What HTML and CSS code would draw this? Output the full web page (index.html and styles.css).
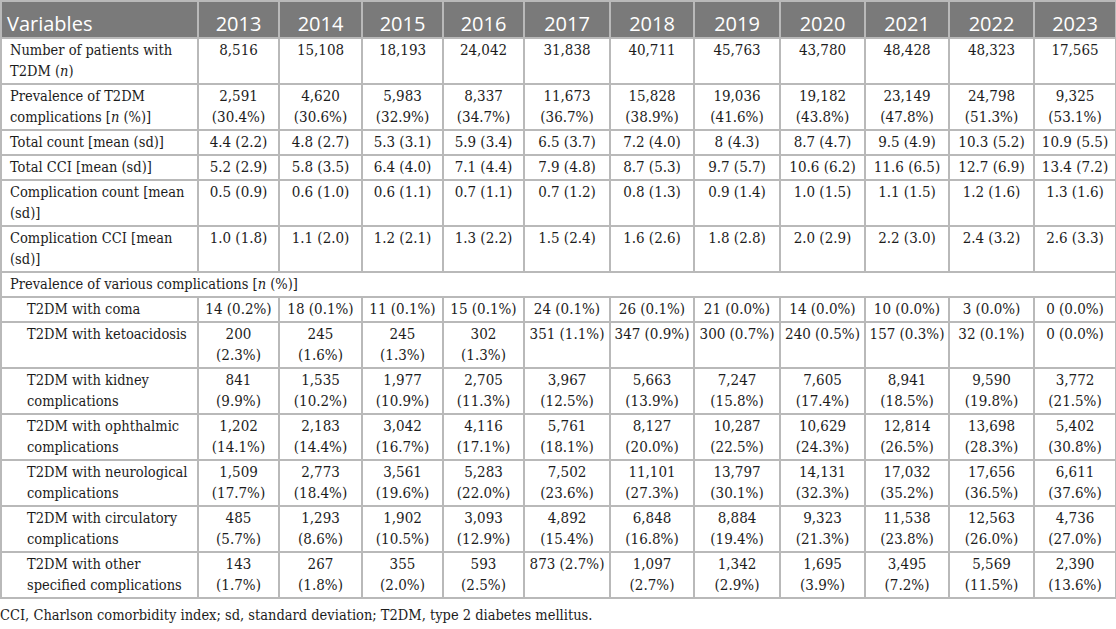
FILE: index.html
```html
<!DOCTYPE html>
<html lang="en">
<head>
<meta charset="utf-8">
<title>T2DM complications 2013–2023</title>
<link rel="stylesheet" href="styles.css">
</head>
<body>
<table class="data">
<colgroup>
<col class="c-var"><col class="c81"><col class="c83"><col class="c81"><col class="c81"><col class="c86"><col class="c84"><col class="c86"><col class="c85"><col class="c84"><col class="c85"><col class="c82">
</colgroup>
<thead>
<tr>
<th class="h-var">Variables</th><th>2013</th><th>2014</th><th>2015</th><th>2016</th><th>2017</th><th>2018</th><th>2019</th><th>2020</th><th>2021</th><th>2022</th><th>2023</th>
</tr>
</thead>
<tbody>
<tr>
<td class="lbl">Number of patients with<br>T2DM (<i>n</i>)</td>
<td>8,516</td><td>15,108</td><td>18,193</td><td>24,042</td><td>31,838</td><td>40,711</td><td>45,763</td><td>43,780</td><td>48,428</td><td>48,323</td><td>17,565</td>
</tr>
<tr>
<td class="lbl">Prevalence of T2DM<br>complications [<i>n</i> (%)]</td>
<td>2,591<br>(30.4%)</td><td>4,620<br>(30.6%)</td><td>5,983<br>(32.9%)</td><td>8,337<br>(34.7%)</td><td>11,673<br>(36.7%)</td><td>15,828<br>(38.9%)</td><td>19,036<br>(41.6%)</td><td>19,182<br>(43.8%)</td><td>23,149<br>(47.8%)</td><td>24,798<br>(51.3%)</td><td>9,325<br>(53.1%)</td>
</tr>
<tr>
<td class="lbl">Total count [mean (sd)]</td>
<td>4.4 (2.2)</td><td>4.8 (2.7)</td><td>5.3 (3.1)</td><td>5.9 (3.4)</td><td>6.5 (3.7)</td><td>7.2 (4.0)</td><td>8 (4.3)</td><td>8.7 (4.7)</td><td>9.5 (4.9)</td><td>10.3 (5.2)</td><td>10.9 (5.5)</td>
</tr>
<tr>
<td class="lbl">Total CCI [mean (sd)]</td>
<td>5.2 (2.9)</td><td>5.8 (3.5)</td><td>6.4 (4.0)</td><td>7.1 (4.4)</td><td>7.9 (4.8)</td><td>8.7 (5.3)</td><td>9.7 (5.7)</td><td>10.6 (6.2)</td><td>11.6 (6.5)</td><td>12.7 (6.9)</td><td>13.4 (7.2)</td>
</tr>
<tr>
<td class="lbl">Complication count [mean<br>(sd)]</td>
<td>0.5 (0.9)</td><td>0.6 (1.0)</td><td>0.6 (1.1)</td><td>0.7 (1.1)</td><td>0.7 (1.2)</td><td>0.8 (1.3)</td><td>0.9 (1.4)</td><td>1.0 (1.5)</td><td>1.1 (1.5)</td><td>1.2 (1.6)</td><td>1.3 (1.6)</td>
</tr>
<tr>
<td class="lbl">Complication CCI [mean<br>(sd)]</td>
<td>1.0 (1.8)</td><td>1.1 (2.0)</td><td>1.2 (2.1)</td><td>1.3 (2.2)</td><td>1.5 (2.4)</td><td>1.6 (2.6)</td><td>1.8 (2.8)</td><td>2.0 (2.9)</td><td>2.2 (3.0)</td><td>2.4 (3.2)</td><td>2.6 (3.3)</td>
</tr>
<tr>
<td class="lbl section" colspan="12">Prevalence of various complications [<i>n</i> (%)]</td>
</tr>
<tr>
<td class="lbl sub">T2DM with coma</td>
<td>14 (0.2%)</td><td>18 (0.1%)</td><td>11 (0.1%)</td><td>15 (0.1%)</td><td>24 (0.1%)</td><td>26 (0.1%)</td><td>21 (0.0%)</td><td>14 (0.0%)</td><td>10 (0.0%)</td><td>3 (0.0%)</td><td>0 (0.0%)</td>
</tr>
<tr>
<td class="lbl sub">T2DM with ketoacidosis</td>
<td>200<br>(2.3%)</td><td>245<br>(1.6%)</td><td>245<br>(1.3%)</td><td>302<br>(1.3%)</td><td>351 (1.1%)</td><td>347 (0.9%)</td><td>300 (0.7%)</td><td>240 (0.5%)</td><td>157 (0.3%)</td><td>32 (0.1%)</td><td>0 (0.0%)</td>
</tr>
<tr>
<td class="lbl sub">T2DM with kidney<br>complications</td>
<td>841<br>(9.9%)</td><td>1,535<br>(10.2%)</td><td>1,977<br>(10.9%)</td><td>2,705<br>(11.3%)</td><td>3,967<br>(12.5%)</td><td>5,663<br>(13.9%)</td><td>7,247<br>(15.8%)</td><td>7,605<br>(17.4%)</td><td>8,941<br>(18.5%)</td><td>9,590<br>(19.8%)</td><td>3,772<br>(21.5%)</td>
</tr>
<tr>
<td class="lbl sub">T2DM with ophthalmic<br>complications</td>
<td>1,202<br>(14.1%)</td><td>2,183<br>(14.4%)</td><td>3,042<br>(16.7%)</td><td>4,116<br>(17.1%)</td><td>5,761<br>(18.1%)</td><td>8,127<br>(20.0%)</td><td>10,287<br>(22.5%)</td><td>10,629<br>(24.3%)</td><td>12,814<br>(26.5%)</td><td>13,698<br>(28.3%)</td><td>5,402<br>(30.8%)</td>
</tr>
<tr>
<td class="lbl sub">T2DM with neurological<br>complications</td>
<td>1,509<br>(17.7%)</td><td>2,773<br>(18.4%)</td><td>3,561<br>(19.6%)</td><td>5,283<br>(22.0%)</td><td>7,502<br>(23.6%)</td><td>11,101<br>(27.3%)</td><td>13,797<br>(30.1%)</td><td>14,131<br>(32.3%)</td><td>17,032<br>(35.2%)</td><td>17,656<br>(36.5%)</td><td>6,611<br>(37.6%)</td>
</tr>
<tr>
<td class="lbl sub">T2DM with circulatory<br>complications</td>
<td>485<br>(5.7%)</td><td>1,293<br>(8.6%)</td><td>1,902<br>(10.5%)</td><td>3,093<br>(12.9%)</td><td>4,892<br>(15.4%)</td><td>6,848<br>(16.8%)</td><td>8,884<br>(19.4%)</td><td>9,323<br>(21.3%)</td><td>11,538<br>(23.8%)</td><td>12,563<br>(26.0%)</td><td>4,736<br>(27.0%)</td>
</tr>
<tr>
<td class="lbl sub">T2DM with other<br>specified complications</td>
<td>143<br>(1.7%)</td><td>267<br>(1.8%)</td><td>355<br>(2.0%)</td><td>593<br>(2.5%)</td><td>873 (2.7%)</td><td>1,097<br>(2.7%)</td><td>1,342<br>(2.9%)</td><td>1,695<br>(3.9%)</td><td>3,495<br>(7.2%)</td><td>5,569<br>(11.5%)</td><td>2,390<br>(13.6%)</td>
</tr>
</tbody>
</table>
<p class="note">CCI, Charlson comorbidity index; sd, standard deviation; T2DM, type 2 diabetes mellitus.</p>
</body>
</html>
```

FILE: styles.css
```css
html, body {
  margin: 0;
  padding: 0;
  background: #ffffff;
}

body {
  font-family: "DejaVu Serif Condensed", "DejaVu Serif", serif;
  font-stretch: condensed;
  color: #1c1c1c;
}

.data {
  border-collapse: collapse;
  table-layout: fixed;
  width: 1116px;
  border: 2px solid #b9b9b9;
}

.c-var { width: 197px; }
.c81 { width: 81px; }
.c82 { width: 82px; }
.c83 { width: 83px; }
.c84 { width: 84px; }
.c85 { width: 85px; }
.c86 { width: 86px; }

.data th {
  background: #7a7a7a;
  color: #ffffff;
  font-family: "Open Sans", "Noto Sans", sans-serif;
  font-stretch: normal;
  font-weight: 400;
  font-size: 20px;
  line-height: 27px;
  padding: 8px 2px 0;
  text-align: center;
  border: 2px solid #b9b9b9;
  white-space: nowrap;
}

.data th.h-var {
  text-align: left;
  padding-left: 5px;
}

.data td {
  font-size: 15px;
  line-height: 21px;
  padding: 1px 2px;
  text-align: center;
  vertical-align: top;
  border: 2px solid #b9b9b9;
  white-space: nowrap;
}

.data td.lbl {
  font-size: 14.5px;
  text-align: left;
  padding-left: 8px;
}

.data td.sub {
  padding-left: 25px;
}

.note {
  margin: 6px 0 0;
  font-size: 14.5px;
  line-height: 21px;
}
```
